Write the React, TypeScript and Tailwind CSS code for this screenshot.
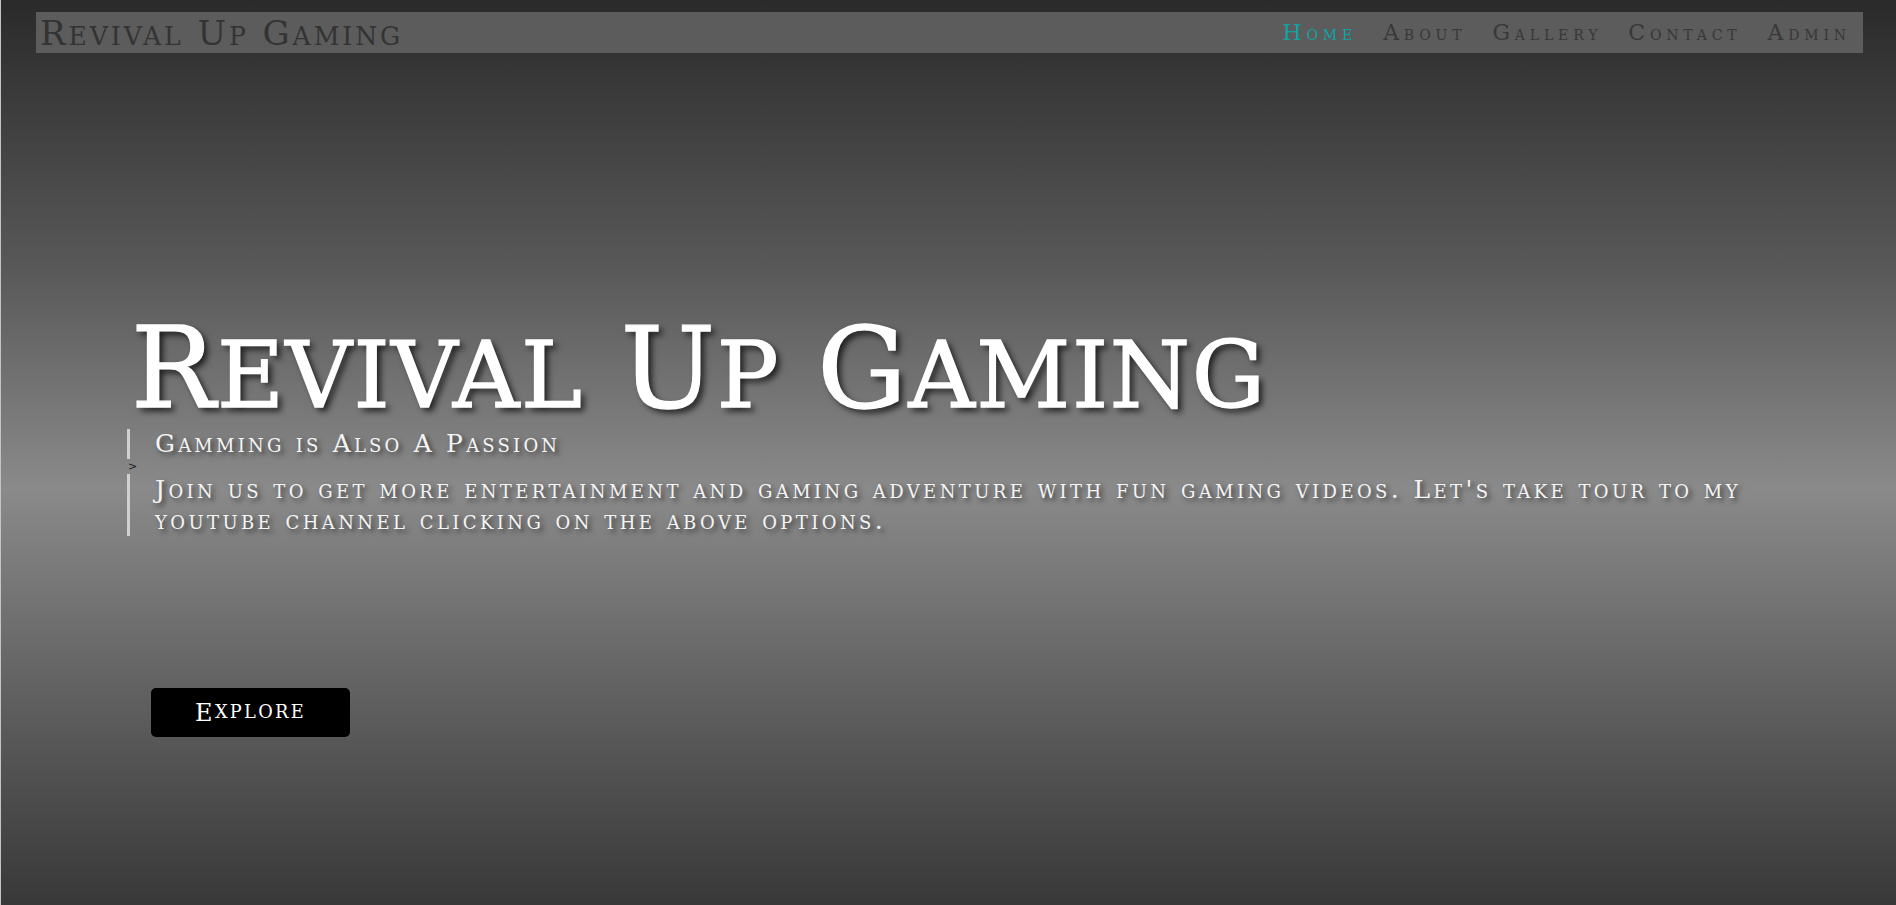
import React from "react";

// Copperplate-like small caps: lowercase runs are set as smaller capitals
function Caps({ text, small }: { text: string; small: string }) {
  const parts = text.split(/([a-z]+)/);
  return (
    <>
      {parts.map((p, i) =>
        /^[a-z]+$/.test(p) ? (
          <span key={i} className={small}>
            {p}
          </span>
        ) : (
          <React.Fragment key={i}>{p}</React.Fragment>
        )
      )}
    </>
  );
}

const links = ["Home", "About", "Gallery", "Contact", "Admin"];

const serif = "font-['DejaVu_Serif','Liberation_Serif',serif]";

export default function App() {
  return (
    <div
      className={`min-h-[905px] border-l border-[#c4c4c4] bg-[linear-gradient(180deg,#2a2a2a_0%,#595959_30%,#8a8a8a_54%,#5e5e5e_78%,#383838_100%)] pt-3 ${serif}`}
    >
      <nav className="ml-[35px] mr-[33px] flex h-[41px] items-center justify-between bg-[#5c5c5c] pl-1 pr-[12px] uppercase">
        <a className="text-[34px] leading-none tracking-[2.9px] text-[#333333]">
          <Caps text="Revival Up Gaming" small="text-[0.74em] leading-none" />
        </a>
        <ul className="flex items-center gap-[26px] text-[22px] leading-none tracking-[4.8px]">
          {links.map((l, i) => (
            <li key={l} className={i === 0 ? "text-[#0fa3a3]" : "text-[#383838]"}>
              <Caps text={l} small="text-[0.64em] leading-none" />
            </li>
          ))}
        </ul>
      </nav>

      <main className="pl-[126px] pt-[259px]">
        <h1 className="pl-[4px] text-[112px] leading-none tracking-[1.6px] text-white uppercase [-webkit-text-stroke:1.4px_white] [text-shadow:4px_4px_6px_rgba(0,0,0,0.75)]">
          <Caps text="Revival Up Gaming" small="text-[0.82em] leading-none" />
        </h1>

        <div className="mt-[5px] border-l-[3px] border-[#d0d0d0] pl-[25px] text-[25px] leading-[30px] tracking-[3.2px] text-[#f4f4f4] uppercase [text-shadow:3px_3px_5px_rgba(0,0,0,0.6)]">
          <Caps text="Gamming is Also A Passion" small="text-[0.72em] leading-none" />
        </div>
        <div className="pl-[1px] text-[11px] leading-[15px] text-[#222]">&gt;</div>
        <div className="w-[1660px] border-l-[3px] border-[#d0d0d0] pl-[25px] text-[25px] leading-[31px] tracking-[3.4px] text-[#f4f4f4] uppercase [text-shadow:3px_3px_5px_rgba(0,0,0,0.6)]">
          <Caps
            text="Join us to get more entertainment and gaming adventure with fun gaming videos. Let's take tour to my youtube channel clicking on the above options."
            small="text-[0.72em] leading-none"
          />
        </div>

        <button className="ml-[24px] mt-[152px] flex h-[49px] w-[199px] items-center justify-center rounded-[5px] bg-black text-[24px] leading-none tracking-[2.3px] text-white uppercase">
          <Caps text="Explore" small="text-[0.74em] leading-none" />
        </button>
      </main>
    </div>
  );
}
